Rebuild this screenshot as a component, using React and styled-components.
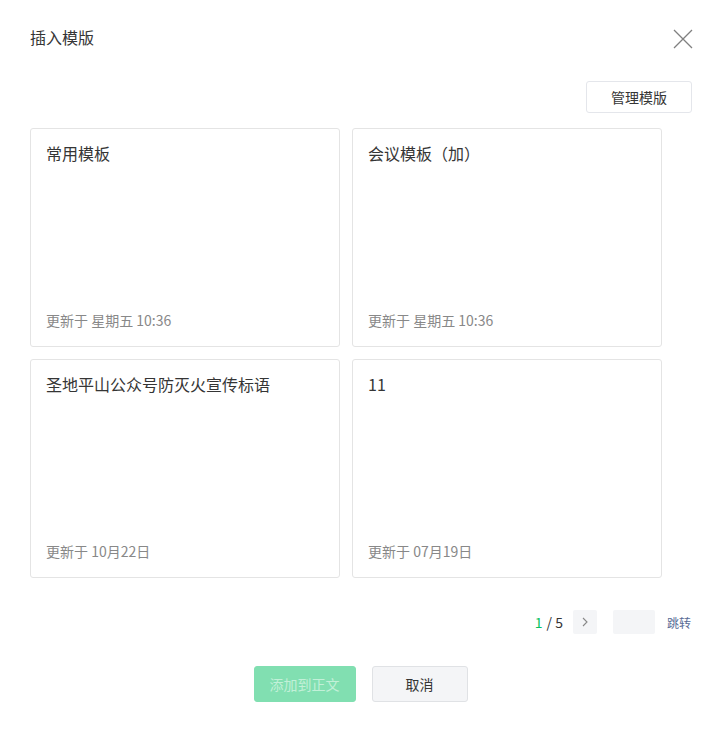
import React from "react";
import styled, { createGlobalStyle } from "styled-components";

const Global = createGlobalStyle`
  body {
    margin: 0;
    background: #fff;
    font-family: "Noto Sans CJK SC", "Noto Sans", sans-serif;
    color: #333;
  }
`;

const Dialog = styled.div`
  width: 721px;
  height: 729px;
  box-sizing: border-box;
  padding: 0 30px;
  display: flex;
  flex-direction: column;
`;

const Header = styled.div`
  height: 74px;
  display: flex;
  align-items: center;
  justify-content: space-between;
`;

const Title = styled.h1`
  margin: 0;
  font-size: 16px;
  line-height: 24px;
  font-weight: normal;
  color: #353535;
`;

const Close = styled.button`
  width: 20px;
  height: 20px;
  padding: 0;
  margin-right: -2px;
  margin-top: 4px;
  border: none;
  background: none;
  display: flex;
  align-items: center;
  justify-content: center;
`;

const Toolbar = styled.div`
  display: flex;
  justify-content: flex-end;
  margin-top: 7px;
  margin-right: -1px;
`;

const Button = styled.button`
  height: 32px;
  padding: 0 24px;
  font-family: inherit;
  font-size: 14px;
  color: #353535;
  background: #fff;
  border: 1px solid #e4e6eb;
  border-radius: 3px;
  cursor: pointer;
`;

const Grid = styled.div`
  display: grid;
  grid-template-columns: repeat(2, 310px);
  gap: 12px 12px;
  margin-top: 15px;
`;

const Card = styled.div`
  height: 219px;
  box-sizing: border-box;
  border: 1px solid #e4e4e4;
  border-radius: 3px;
  padding: 12px 15px 15px;
  display: flex;
  flex-direction: column;
  justify-content: space-between;
`;

const CardTitle = styled.div`
  font-size: 16px;
  line-height: 24px;
  color: #353535;
`;

const CardDate = styled.div`
  font-size: 14px;
  line-height: 22px;
  color: #888;
`;

const Pager = styled.div`
  display: flex;
  justify-content: flex-end;
  align-items: center;
  margin-top: 32px;
  height: 24px;
  font-size: 14px;
  color: #353535;
`;

const Current = styled.span`
  color: #07c160;
  margin-right: 4px;
`;

const PageBtn = styled.div`
  width: 24px;
  height: 24px;
  margin-left: 10px;
  background: #f4f5f7;
  border-radius: 2px;
  display: flex;
  align-items: center;
  justify-content: center;
`;

const PageInput = styled.input`
  width: 42px;
  height: 24px;
  box-sizing: border-box;
  margin-left: 16px;
  border: none;
  border-radius: 2px;
  background: #f4f5f7;
  outline: none;
`;

const Jump = styled.span`
  margin-left: 12px;
  font-size: 12px;
  color: #576b95;
`;

const Footer = styled.div`
  display: flex;
  justify-content: center;
  gap: 16px;
  margin-top: 32px;
`;

const FootBtn = styled.button`
  height: 36px;
  width: ${(p) => p.$w}px;
  font-family: inherit;
  font-size: 14px;
  border-radius: 3px;
  border: 1px solid ${(p) => (p.$primary ? "#81dfb1" : "#e0e2e5")};
  background: ${(p) => (p.$primary ? "#81dfb1" : "#f4f5f7")};
  color: ${(p) => (p.$primary ? "#c2f0d8" : "#353535")};
`;

const templates = [
  { title: "常用模板", date: "更新于 星期五 10:36" },
  { title: "会议模板（加）", date: "更新于 星期五 10:36" },
  { title: "圣地平山公众号防灭火宣传标语", date: "更新于 10月22日" },
  { title: "11", date: "更新于 07月19日" },
];

export default function App() {
  return (
    <Dialog>
      <Global />
      <Header>
        <Title>插入模版</Title>
        <Close aria-label="关闭">
          <svg width="20" height="20" viewBox="0 0 20 20">
            <path d="M1 1L19 19M19 1L1 19" stroke="#808080" strokeWidth="1.3" fill="none" />
          </svg>
        </Close>
      </Header>
      <Toolbar>
        <Button>管理模版</Button>
      </Toolbar>
      <Grid>
        {templates.map((t) => (
          <Card key={t.title}>
            <CardTitle>{t.title}</CardTitle>
            <CardDate>{t.date}</CardDate>
          </Card>
        ))}
      </Grid>
      <Pager>
        <Current>1</Current>/ 5
        <PageBtn>
          <svg width="8" height="10" viewBox="0 0 8 10">
            <path d="M2 1L6 5L2 9" stroke="#888" strokeWidth="1.1" fill="none" />
          </svg>
        </PageBtn>
        <PageInput />
        <Jump>跳转</Jump>
      </Pager>
      <Footer>
        <FootBtn $primary $w={102}>添加到正文</FootBtn>
        <FootBtn $w={96}>取消</FootBtn>
      </Footer>
    </Dialog>
  );
}
